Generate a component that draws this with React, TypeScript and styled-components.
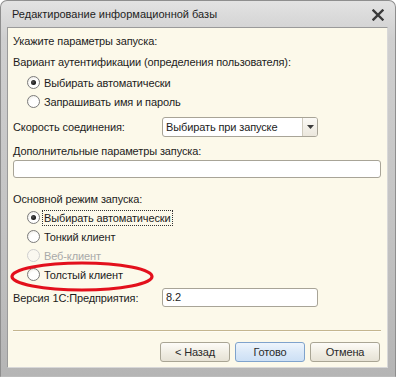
import { FC } from 'react';
import styled, { createGlobalStyle } from 'styled-components';

const GlobalStyle = createGlobalStyle`
  html, body {
    margin: 0;
    padding: 0;
    background: #ffffff;
  }
  body {
    font-family: 'Liberation Sans', Arial, sans-serif;
    font-size: 11px;
    letter-spacing: -0.12px;
    color: #1c1c1c;
  }
`;

const Window = styled.div`
  position: relative;
  width: 396px;
  height: 377px;
  box-sizing: border-box;
  display: flex;
  flex-direction: column;
  padding: 0 7px 8px 6px;
  border-radius: 7px 7px 0 0;
  border: 1px solid #8e8e8e;
  border-bottom-color: #bcbcbc;
  background: linear-gradient(180deg, #e2e2e2 0%, #cfcfcf 10%, #c3c3c3 60%, #b5b5b5 100%);
`;

const TitleBar = styled.div`
  height: 26px;
  display: flex;
  align-items: center;
  justify-content: space-between;
  padding: 0 4px 0 5px;
  font-size: 11px;
  letter-spacing: 0;
  color: #1e1e1e;
`;

const CloseGlyph = styled.svg`
  width: 12px;
  height: 12px;
  margin-top: 2px;
`;

const Client = styled.div`
  flex: 1;
  display: flex;
  flex-direction: column;
  padding: 4px 6px 5px 5px;
  background: #fcf9ea;
  border: 1px solid #9a9a9a;
  border-right-color: #d8d8d8;
  border-bottom-color: #d8d8d8;
`;

const Label = styled.div<{ $top?: number }>`
  height: 18px;
  line-height: 18px;
  margin-top: ${(p) => p.$top ?? 0}px;
  white-space: nowrap;
`;

const RadioList = styled.div<{ $top?: number }>`
  display: flex;
  flex-direction: column;
  padding-left: 14px;
  margin-top: ${(p) => p.$top ?? 0}px;
`;

const RadioRow = styled.div<{ $disabled?: boolean }>`
  height: 19px;
  display: flex;
  align-items: center;
  gap: 2px;
  color: ${(p) => (p.$disabled ? '#a9a9a9' : '#1c1c1c')};
`;

const RadioCircle = styled.span<{ $checked?: boolean; $disabled?: boolean }>`
  position: relative;
  width: 11px;
  height: 11px;
  border-radius: 50%;
  border: 1px solid ${(p) => (p.$disabled ? '#cfcfcf' : '#7b7b7b')};
  background: ${(p) =>
    p.$disabled
      ? '#faf8f0'
      : 'radial-gradient(circle at 60% 65%, #ffffff 0%, #ffffff 45%, #e6e3da 100%)'};
  flex-shrink: 0;
  &::after {
    content: '';
    display: ${(p) => (p.$checked ? 'block' : 'none')};
    position: absolute;
    left: 3px;
    top: 3px;
    width: 5px;
    height: 5px;
    border-radius: 50%;
    background: radial-gradient(circle at 40% 40%, #555 0%, #111 70%);
  }
`;

const RadioText = styled.span<{ $focused?: boolean }>`
  line-height: 14px;
  padding: 0 1px;
  border: 1px dotted ${(p) => (p.$focused ? '#333' : 'transparent')};
`;

const FieldRow = styled.div<{ $top?: number }>`
  display: flex;
  align-items: center;
  margin-top: ${(p) => p.$top ?? 0}px;
`;

const FieldLabel = styled.div`
  width: 149px;
  flex-shrink: 0;
  white-space: nowrap;
`;

const Select = styled.div`
  width: 156px;
  height: 20px;
  box-sizing: border-box;
  display: flex;
  align-items: stretch;
  border: 1px solid #a8a497;
  border-radius: 3px;
  background: #ffffff;
  overflow: hidden;
`;

const SelectValue = styled.div`
  flex: 1;
  padding-left: 3px;
  line-height: 18px;
  white-space: nowrap;
`;

const SelectArrow = styled.div`
  width: 14px;
  display: flex;
  align-items: center;
  justify-content: center;
  border-left: 1px solid #cfcbbe;
  background: linear-gradient(180deg, #fbfaf6 0%, #ebe7dc 100%);
`;

const TextInput = styled.div<{ $width?: number; $height?: number }>`
  width: ${(p) => (p.$width ? `${p.$width}px` : '100%')};
  height: ${(p) => p.$height ?? 18}px;
  box-sizing: border-box;
  border: 1px solid #a8a497;
  border-radius: 3px;
  background: #ffffff;
  padding-left: 3px;
  line-height: ${(p) => (p.$height ?? 18) - 2}px;
`;

const Spacer = styled.div`
  flex: 1;
`;

const Separator = styled.div`
  height: 0;
  border-top: 1px solid #c4b68f;
  border-bottom: 1px solid #fffdf5;
  margin-bottom: 10px;
`;

const ButtonRow = styled.div`
  display: flex;
  justify-content: flex-end;
  gap: 5px;
  padding-right: 1px;
`;

const Button = styled.div<{ $primary?: boolean }>`
  width: 70px;
  height: 20px;
  box-sizing: border-box;
  display: flex;
  align-items: center;
  justify-content: center;
  border-radius: 3px;
  border: 1px solid ${(p) => (p.$primary ? '#7fa3cc' : '#a9a594')};
  background: ${(p) =>
    p.$primary
      ? 'linear-gradient(180deg, #eef5fc 0%, #dbe9f8 50%, #cde0f5 100%)'
      : 'linear-gradient(180deg, #fdfcf8 0%, #f1eee4 50%, #e6e2d5 100%)'};
  color: #2a2a2a;
`;

const Annotation = styled.svg`
  position: absolute;
  left: 8px;
  top: 260px;
  pointer-events: none;
`;

const App: FC = () => {
  return (
    <>
      <GlobalStyle />
      <Window>
        <TitleBar>
          <span>Редактирование информационной базы</span>
          <CloseGlyph viewBox='0 0 12 12'>
            <path d='M1.5 1.5 L10.5 10.5 M10.5 1.5 L1.5 10.5' stroke='#3a3a3a' strokeWidth='2.4' strokeLinecap='square' />
          </CloseGlyph>
        </TitleBar>
        <Client>
          <Label>Укажите параметры запуска:</Label>
          <Label $top={3}>Вариант аутентификации (определения пользователя):</Label>
          <RadioList $top={2}>
            <RadioRow>
              <RadioCircle $checked />
              <RadioText>Выбирать автоматически</RadioText>
            </RadioRow>
            <RadioRow>
              <RadioCircle />
              <RadioText>Запрашивать имя и пароль</RadioText>
            </RadioRow>
          </RadioList>
          <FieldRow $top={6}>
            <FieldLabel>Скорость соединения:</FieldLabel>
            <Select>
              <SelectValue>Выбирать при запуске</SelectValue>
              <SelectArrow>
                <svg width='7' height='4' viewBox='0 0 7 4'>
                  <path d='M0 0 H7 L3.5 4 Z' fill='#3c3c3c' />
                </svg>
              </SelectArrow>
            </Select>
          </FieldRow>
          <Label $top={5}>Дополнительные параметры запуска:</Label>
          <TextInput />
          <Label $top={12}>Основной режим запуска:</Label>
          <RadioList>
            <RadioRow>
              <RadioCircle $checked />
              <RadioText $focused>Выбирать автоматически</RadioText>
            </RadioRow>
            <RadioRow>
              <RadioCircle />
              <RadioText>Тонкий клиент</RadioText>
            </RadioRow>
            <RadioRow $disabled>
              <RadioCircle $disabled />
              <RadioText>Веб-клиент</RadioText>
            </RadioRow>
            <RadioRow>
              <RadioCircle />
              <RadioText>Толстый клиент</RadioText>
            </RadioRow>
          </RadioList>
          <FieldRow $top={4}>
            <FieldLabel>Версия 1С:Предприятия:</FieldLabel>
            <TextInput $width={156} $height={19}>8.2</TextInput>
          </FieldRow>
          <Spacer />
          <Separator />
          <ButtonRow>
            <Button>&lt; Назад</Button>
            <Button $primary>Готово</Button>
            <Button>Отмена</Button>
          </ButtonRow>
        </Client>
        <Annotation width='148' height='32' viewBox='0 0 148 32'>
          <ellipse cx='73' cy='15.5' rx='70' ry='13.5' fill='none' stroke='#e3101c' strokeWidth='3.2' />
        </Annotation>
      </Window>
    </>
  );
};

export default App;
